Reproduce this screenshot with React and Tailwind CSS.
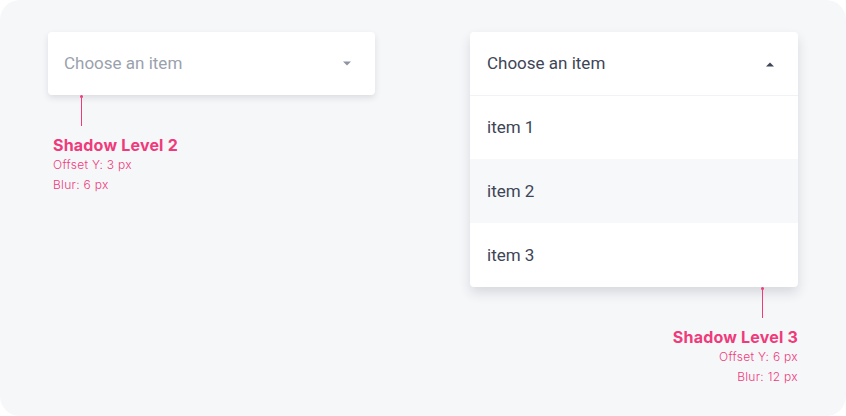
const PINK = 'text-[#ef3a7b]'

function Caret({ up, className }) {
  return (
    <svg width="10" height="6" viewBox="0 0 10 6" className={className}>
      {up ? <path d="M1 5.5 L5 1.5 L9 5.5 Z" fill="currentColor" /> : <path d="M1 0.5 L5 4.5 L9 0.5 Z" fill="currentColor" />}
    </svg>
  )
}

function Note({ title, lines, align }) {
  const right = align === 'right'
  return (
    <div className={`flex flex-col ${right ? 'items-end' : 'items-start'} font-['Inter',sans-serif]`}>
      <div className={`flex flex-col items-center ${right ? 'mr-[34px]' : 'ml-[32px]'}`}>
        <span className="block w-[3px] h-[3px] rounded-full bg-[#ef3a7b]" />
        <span className="block w-px h-[28px] bg-[#ef3a7b]" />
      </div>
      <div className={`mt-[7px] text-[16px] leading-[24px] font-bold tracking-[0.2px] ${PINK} ${right ? 'text-right' : 'ml-[5px]'}`}>
        {title}
      </div>
      {lines.map((l, i) => (
        <div key={l} className={`text-[12px] leading-[20px] font-light tracking-[0.3px] ${i === 0 ? '-mt-[2px]' : ''} ${PINK} ${right ? 'text-right' : 'ml-[5px]'}`}>
          {l}
        </div>
      ))}
    </div>
  )
}

export default function App() {
  return (
    <div className="w-[846px] h-[416px] bg-white">
      <div className="w-full h-full rounded-[20px] bg-[#f6f7f9] flex justify-between px-12 pt-8 font-['Roboto',sans-serif]">
        <div className="w-[327px] flex flex-col">
          <div className="h-[63px] bg-white rounded-[4px] shadow-[0_3px_6px_rgba(30,41,59,0.12)] flex items-center justify-between pl-4 pr-[23px]">
            <span className="text-[17px] pt-[1px] text-[#9aa1ad]">Choose an item</span>
            <Caret className="text-[#8e95a2]" />
          </div>
          <Note title="Shadow Level 2" lines={['Offset Y: 3 px', 'Blur: 6 px']} />
        </div>

        <div className="w-[328px] flex flex-col">
          <div className="bg-white rounded-[4px] shadow-[0_6px_12px_rgba(30,41,59,0.14)] overflow-hidden text-[17px] text-[#3d4556]">
            <div className="h-[64px] flex items-center justify-between pl-[17px] pr-[23px] border-b border-[#f1f2f5]">
              <span className="pt-[1px]">Choose an item</span>
              <Caret up className="text-[#3d4556]" />
            </div>
            <div className="h-[63px] flex items-center pl-[17px] pt-[1px]">item 1</div>
            <div className="h-[64px] flex items-center pl-[17px] pt-[1px] bg-[#f7f8fa]">item 2</div>
            <div className="h-[64px] flex items-center pl-[17px] pt-[1px]">item 3</div>
          </div>
          <Note title="Shadow Level 3" lines={['Offset Y: 6 px', 'Blur: 12 px']} align="right" />
        </div>
      </div>
    </div>
  )
}
